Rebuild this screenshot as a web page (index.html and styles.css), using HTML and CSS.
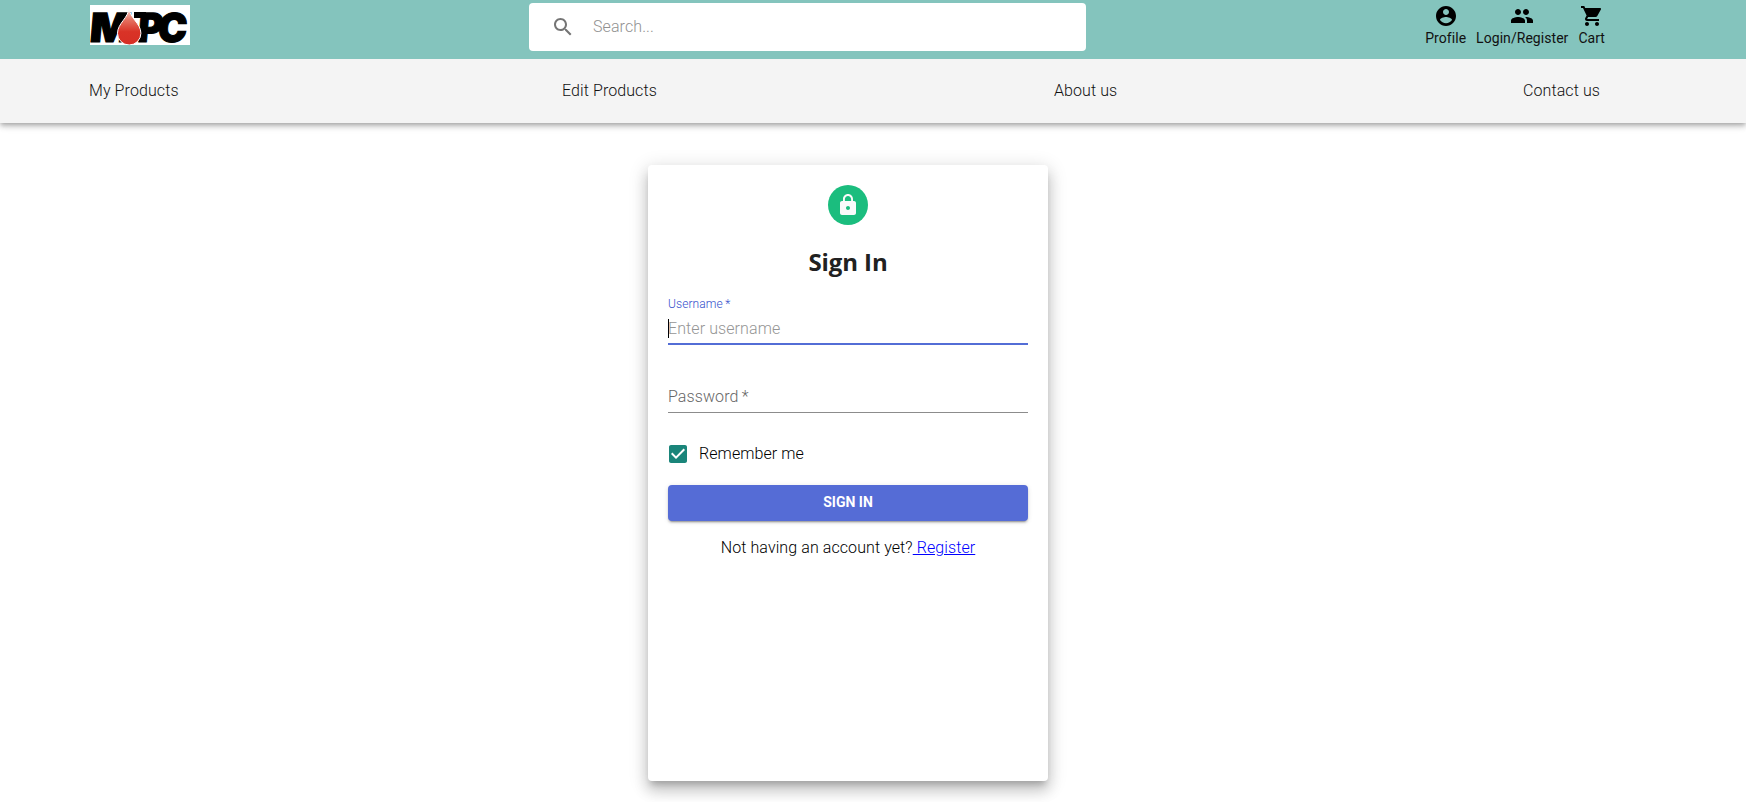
FILE: index.html
```html
<!DOCTYPE html>
<html lang="en">
<head>
<meta charset="utf-8">
<title>MPC - Sign In</title>
<link rel="stylesheet" href="styles.css">
</head>
<body>
<header class="appbar">
  <div class="topbar">
    <a class="logo">
      <svg width="100" height="40" viewBox="0 0 100 40">
        <defs><linearGradient id="drop" x1="0" y1="0" x2="0" y2="1"><stop offset="0" stop-color="#fbe6e0"/><stop offset=".35" stop-color="#e4705f"/><stop offset=".65" stop-color="#d93327"/><stop offset="1" stop-color="#d62f25"/></linearGradient></defs>
        <rect width="100" height="40" fill="#fff"/>
        <text class="logo-letter" transform="translate(0 37) skewX(-5)" x="-1" y="0" textLength="41" lengthAdjust="spacingAndGlyphs">M</text>
        <path d="M44 7h12v6H44z"/>
        <text class="logo-letter" transform="translate(0 37) skewX(-5)" x="47" y="0" textLength="25" lengthAdjust="spacingAndGlyphs">P</text>
        <text class="logo-letter" transform="translate(0 37) skewX(-5)" x="67" y="0" textLength="29" lengthAdjust="spacingAndGlyphs">C</text>
        <path d="M39 2C39 13 27.500 18 27.500 28.300a11.700 11.700 0 0 0 23.400 0C51 18 39 13 39 2Z" fill="url(#drop)" stroke="#fff" stroke-width="1"/>
      </svg>
    </a>
    <label class="search">
      <svg class="search-icon" viewBox="0 0 24 24"><path d="M15.500 14h-.79l-.28-.27C15.410 12.590 16 11.110 16 9.500 16 5.910 13.090 3 9.500 3S3 5.910 3 9.500 5.910 16 9.500 16c1.610 0 3.090-.59 4.230-1.570l.27.28v.79l5 4.990L20.490 19l-4.990-5zm-6 0C7.010 14 5 11.990 5 9.500S7.010 5 9.500 5 14 7.010 14 9.500 11.990 14 9.500 14z"/></svg>
      <input class="search-input" type="text" placeholder="Search...">
    </label>
    <div class="actions">
      <a class="action"><svg viewBox="0 0 24 24"><path d="M12 2C6.480 2 2 6.480 2 12s4.480 10 10 10 10-4.480 10-10S17.520 2 12 2zm0 3c1.660 0 3 1.340 3 3s-1.340 3-3 3-3-1.340-3-3 1.340-3 3-3zm0 14.200c-2.500 0-4.710-1.280-6-3.220.03-1.990 4-3.080 6-3.080 1.990 0 5.970 1.090 6 3.080-1.290 1.940-3.500 3.220-6 3.220z"/></svg><span>Profile</span></a>
      <a class="action"><svg viewBox="0 0 24 24"><path d="M16 11c1.660 0 2.990-1.340 2.990-3S17.660 5 16 5c-1.660 0-3 1.340-3 3s1.340 3 3 3zm-8 0c1.660 0 2.990-1.340 2.990-3S9.660 5 8 5C6.340 5 5 6.340 5 8s1.340 3 3 3zm0 2c-2.330 0-7 1.170-7 3.500V19h14v-2.500c0-2.330-4.670-3.500-7-3.500zm8 0c-.29 0-.62.02-.97.05 1.160.84 1.970 1.970 1.970 3.450V19h6v-2.500c0-2.330-4.670-3.500-7-3.500z"/></svg><span>Login/Register</span></a>
      <a class="action"><svg viewBox="0 0 24 24"><path d="M7 18c-1.100 0-1.990.9-1.990 2S5.900 22 7 22s2-.9 2-2-.9-2-2-2zM1 2v2h2l3.600 7.590-1.350 2.450c-.16.28-.25.61-.25.96 0 1.100.9 2 2 2h12v-2H7.420c-.14 0-.25-.11-.25-.25l.03-.12.9-1.630h7.450c.75 0 1.410-.41 1.750-1.030l3.580-6.490c.08-.14.12-.31.12-.48 0-.55-.45-1-1-1H5.210l-.94-2H1zm16 16c-1.100 0-1.990.9-1.990 2s.89 2 1.990 2 2-.9 2-2-.9-2-2-2z"/></svg><span>Cart</span></a>
    </div>
  </div>
  <nav class="nav">
    <a>My Products</a>
    <a>Edit Products</a>
    <a>About us</a>
    <a>Contact us</a>
  </nav>
</header>
<main class="page">
  <form class="card">
    <div class="avatar"><svg viewBox="0 0 24 24"><path d="M18 8h-1V6c0-2.760-2.240-5-5-5S7 3.240 7 6v2H6c-1.100 0-2 .9-2 2v10c0 1.100.9 2 2 2h12c1.100 0 2-.9 2-2V10c0-1.100-.9-2-2-2zm-6 9c-1.100 0-2-.9-2-2s.9-2 2-2 2 .9 2 2-.9 2-2 2zm3.100-9H8.900V6c0-1.710 1.390-3.100 3.100-3.100 1.710 0 3.100 1.390 3.100 3.100v2z"/></svg></div>
    <h2 class="title">Sign In</h2>
    <div class="field field-active">
      <label class="field-label">Username&thinsp;*</label>
      <div class="field-value"><span class="caret"></span>Enter username</div>
    </div>
    <div class="field field-empty">
      <div class="field-value">Password&thinsp;*</div>
    </div>
    <label class="remember">
      <svg viewBox="0 0 24 24"><path d="M19 3H5c-1.110 0-2 .9-2 2v14c0 1.100.89 2 2 2h14c1.110 0 2-.9 2-2V5c0-1.100-.89-2-2-2zm-9 14l-5-5 1.410-1.410L10 14.170l7.590-7.590L19 8l-9 9z"/></svg>
      <span>Remember me</span>
    </label>
    <button class="submit" type="button">SIGN IN</button>
    <p class="signup">Not having an account yet?<a class="link" href="#"> Register</a></p>
  </form>
</main>
</body>
</html>
```
FILE: styles.css
```css
* { box-sizing: border-box; }
body {
  margin: 0;
  height: 802px;
  overflow: hidden;
  background: #fff;
  color: #000;
  font: 300 16px/24px Roboto, sans-serif;
  letter-spacing: 0.09px;
}
.appbar {
  background: #f4f4f4;
  box-shadow: 0 2px 4px -1px rgba(0, 0, 0, 0.2), 0 4px 5px 0 rgba(0, 0, 0, 0.14), 0 1px 10px 0 rgba(0, 0, 0, 0.12);
}
.topbar {
  display: grid;
  grid-template-columns: 439px 557px 1fr;
  height: 59px;
  padding: 3px 141px 0 90px;
  background: #84c4bd;
}
.logo { padding-top: 2px; }
.logo svg { display: block; }
.logo-letter {
  font: 900 40px Inter, sans-serif;
  letter-spacing: 0;
  stroke: #000;
  stroke-width: 1.2px;
}
.search {
  display: flex;
  align-items: center;
  height: 48px;
  padding: 0 22px;
  border-radius: 4px;
  background: #fff;
}
.search-icon { width: 24px; height: 24px; margin-right: 18px; fill: #757575; }
.search-input {
  flex: 1;
  border: 0;
  outline: 0;
  padding: 0;
  font: inherit;
  letter-spacing: 0.09px;
}
.search-input::placeholder { color: #919191; }
.actions { display: flex; justify-content: flex-end; gap: 10px; padding-top: 1px; }
.action {
  display: flex;
  flex-direction: column;
  align-items: center;
  color: #111;
  font-size: 14px;
  font-weight: 400;
  letter-spacing: 0.05px;
  line-height: 20px;
}
.action svg { width: 24px; height: 24px; fill: #000; }
.nav {
  display: grid;
  grid-template-columns: 473px 492px 469px 1fr;
  align-items: center;
  height: 64px;
  padding-left: 89px;
  color: #111;
}
.page { padding: 42px 0 0 648px; }
.card {
  display: flex;
  flex-direction: column;
  width: 400px;
  height: 616px;
  padding: 20px;
  border-radius: 4px;
  background: #fff;
  box-shadow: 0 6px 6px -3px rgba(0, 0, 0, 0.2), 0 10px 14px 1px rgba(0, 0, 0, 0.14), 0 4px 18px 3px rgba(0, 0, 0, 0.12);
}
.avatar {
  display: grid;
  place-items: center;
  align-self: center;
  width: 40px;
  height: 40px;
  border-radius: 50%;
  background: #1bbd7e;
}
.avatar svg { width: 24px; height: 24px; fill: #fafafa; }
.title {
  margin: 19px 0 16px;
  text-align: center;
  color: #212121;
  font: 700 24px/36px "Open Sans", sans-serif;
  letter-spacing: -0.1px;
}
.field-active { height: 49px; margin-bottom: 40px; border-bottom: 2px solid #536dd6; }
.field-label { display: block; color: #3450cc; font-size: 12px; line-height: 17px; }
.field-active .field-value { display: flex; align-items: center; height: 31px; color: #959595; }
.caret { width: 1px; height: 19px; margin-right: -1px; background: #000; }
.field-empty { height: 28px; border-bottom: 1px solid #8c8c8c; color: #666; }
.remember { display: flex; align-items: center; gap: 9px; height: 24px; margin: 29px 0 19px -2px; }
.remember svg { width: 24px; height: 24px; fill: #1a857a; }
.submit {
  height: 36px;
  border: 0;
  border-radius: 4px;
  padding: 0 0 2px;
  background: #556cd6;
  color: #fff;
  font: 700 14px/34px Roboto, sans-serif;
  box-shadow: 0 3px 1px -2px rgba(0, 0, 0, 0.2), 0 2px 2px 0 rgba(0, 0, 0, 0.14), 0 1px 5px 0 rgba(0, 0, 0, 0.12);
}
.signup { margin: 15px 0 0; text-align: center; }
.link { color: #00f; }
```
